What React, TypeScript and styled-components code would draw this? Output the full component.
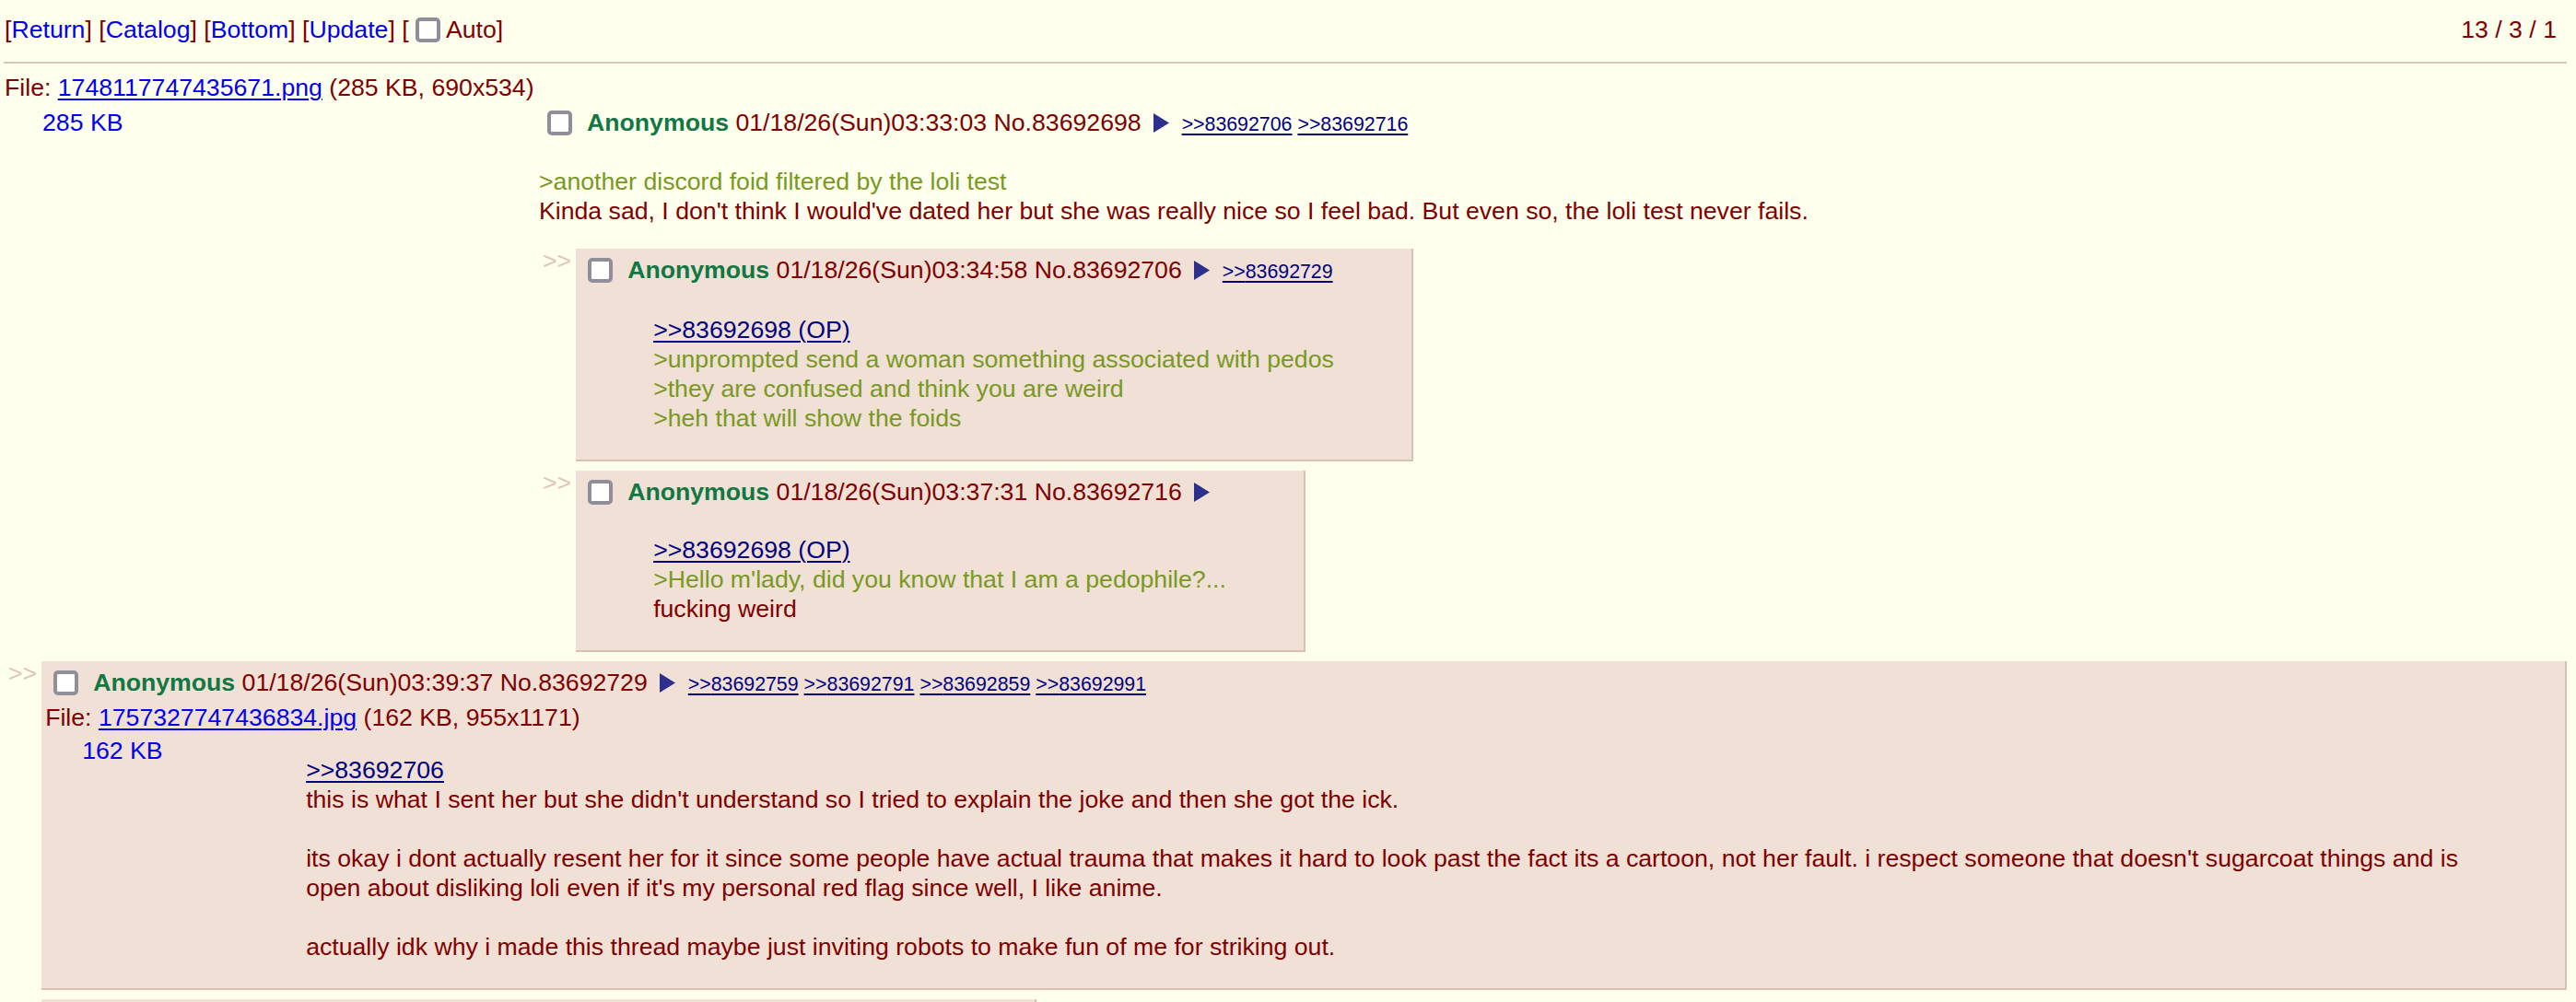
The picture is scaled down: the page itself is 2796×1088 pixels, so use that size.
import React from "react";
import styled, { createGlobalStyle } from "styled-components";

const GlobalStyle = createGlobalStyle`
  html, body {
    margin: 0;
    padding: 0;
    background: #ffe;
  }
  body {
    color: #800000;
    font-family: "Liberation Sans", Arial, Helvetica, sans-serif;
    font-size: 26.67px;
    line-height: 32px;
  }
`;

type Post = {
  no: string;
  time: string;
  backlinks: string[];
  file?: { name: string; info: string; size: string };
  body: React.ReactNode;
};

// built inside App so the styled parts below are defined by then
const getNestedReplies = (): Post[] => [
  {
    no: "83692706",
    time: "01/18/26(Sun)03:34:58",
    backlinks: ["83692729"],
    body: (
      <>
        <QuoteLink>&gt;&gt;83692698 (OP)</QuoteLink>
        <br />
        <Green>&gt;unprompted send a woman something associated with pedos</Green>
        <br />
        <Green>&gt;they are confused and think you are weird</Green>
        <br />
        <Green>&gt;heh that will show the foids</Green>
      </>
    ),
  },
  {
    no: "83692716",
    time: "01/18/26(Sun)03:37:31",
    backlinks: [],
    body: (
      <>
        <QuoteLink>&gt;&gt;83692698 (OP)</QuoteLink>
        <br />
        <Green>&gt;Hello m'lady, did you know that I am a pedophile?...</Green>
        <br />
        fucking weird
      </>
    ),
  },
];

const getReplies = (): Post[] => [
  {
    no: "83692729",
    time: "01/18/26(Sun)03:39:37",
    backlinks: ["83692759", "83692791", "83692859", "83692991"],
    file: { name: "1757327747436834.jpg", info: "(162 KB, 955x1171)", size: "162 KB" },
    body: (
      <>
        <QuoteLink>&gt;&gt;83692706</QuoteLink>
        <br />
        this is what I sent her but she didn't understand so I tried to explain the joke and then she got the ick.
        <br />
        <br />
        its okay i dont actually resent her for it since some people have actual trauma that makes it hard to look past the fact its a cartoon, not her fault. i respect someone that doesn't sugarcoat things and is open about disliking loli even if it's my personal red flag since well, I like anime.
        <br />
        <br />
        actually idk why i made this thread maybe just inviting robots to make fun of me for striking out.
      </>
    ),
  },
  {
    no: "83692759",
    time: "01/18/26(Sun)03:41:12",
    backlinks: [],
    body: (
      <>
        <QuoteLink>&gt;&gt;83692729</QuoteLink>
        <br />
        you sent a random girl a loli picture and are shocked that she got weirded out
      </>
    ),
  },
];

const MenuArrow = () => (
  <ArrowSvg viewBox="0 0 17 21" width="17" height="21">
    <polygon points="0,0 17,10.5 0,21" fill="#2e2e8c" />
  </ArrowSvg>
);

const PostHeader = ({ post }: { post: Post }) => (
  <PostInfo>
    <Checkbox $ml={9} $mr={16} />
    <Name>Anonymous</Name> {post.time} No.{post.no}
    <MenuArrow />
    {post.backlinks.map((b) => (
      <Backlink key={b}>&gt;&gt;{b}</Backlink>
    ))}
  </PostInfo>
);

const Reply = ({ post }: { post: Post }) => (
  <ReplyContainer>
    <SideArrows>&gt;&gt;</SideArrows>
    <ReplyBox>
      <PostHeader post={post} />
      {post.file ? (
        <>
          <FileLine $mt={4}>
            File: <FileLink>{post.file.name}</FileLink> {post.file.info}
          </FileLine>
          <FileRow>
            <Thumb $w={163} $ml={40} $mr={80} $mt={4}>
              {post.file.size}
            </Thumb>
            <Blockquote $mt={25} $ml={0}>
              {post.body}
            </Blockquote>
          </FileRow>
        </>
      ) : (
        <Blockquote $mt={31} $ml={80}>
          {post.body}
        </Blockquote>
      )}
    </ReplyBox>
  </ReplyContainer>
);

export default function App() {
  const nested = getNestedReplies();
  const replies = getReplies();
  return (
    <>
      <GlobalStyle />
      <Page>
        <TopBar>
          <Nav>
            [<NavLink>Return</NavLink>] [<NavLink>Catalog</NavLink>] [
            <NavLink>Bottom</NavLink>] [<NavLink>Update</NavLink>] [ <Checkbox $ml={0} $mr={0} /> Auto]
          </Nav>
          <span>13 / 3 / 1</span>
        </TopBar>
        <Divider />

        <FileLine $mt={10}>
          File: <FileLink>1748117747435671.png</FileLink> (285 KB, 690x534)
        </FileLine>
        <FileRow>
          <Thumb $w={500} $ml={41} $mr={39} $mt={6}>
            285 KB
          </Thumb>
          <OpColumn>
            <PostInfo>
              <Checkbox $ml={9} $mr={16} />
              <Name>Anonymous</Name> 01/18/26(Sun)03:33:03 No.83692698
              <MenuArrow />
              <Backlink>&gt;&gt;83692706</Backlink>
              <Backlink>&gt;&gt;83692716</Backlink>
            </PostInfo>
            <OpBlockquote>
              <Green>&gt;another discord foid filtered by the loli test</Green>
              <br />
              Kinda sad, I don't think I would've dated her but she was really nice so I feel bad. But even so, the loli test never fails.
            </OpBlockquote>
            {nested.map((r) => (
              <Reply key={r.no} post={r} />
            ))}
          </OpColumn>
        </FileRow>

        {replies.map((r) => (
          <Reply key={r.no} post={r} />
        ))}
      </Page>
    </>
  );
}

const Page = styled.div`
  padding: 16px 10px 0 5px;
`;

const TopBar = styled.div`
  display: flex;
  justify-content: space-between;
  align-items: center;
  height: 32px;
  padding-right: 11px;
`;

const Nav = styled.div`
  white-space: nowrap;
`;

const NavLink = styled.a`
  color: #0000ee;
  text-decoration: none;
  cursor: pointer;
`;

const Divider = styled.div`
  margin: 19px 0 0 -1px;
  border-top: 2px solid #d9c5bd;
`;

const Checkbox = styled.span<{ $ml: number; $mr: number }>`
  display: inline-block;
  box-sizing: border-box;
  width: 27px;
  height: 27px;
  margin: 0 ${(p) => p.$mr}px 0 ${(p) => p.$ml}px;
  border: 4px solid #8f8e99;
  border-radius: 5px;
  background: #fff;
  vertical-align: -5px;
`;

const FileLine = styled.div<{ $mt: number }>`
  margin-top: ${(p) => p.$mt}px;
  white-space: nowrap;
`;

const FileLink = styled.a`
  color: #0000ee;
  text-decoration: underline;
  text-decoration-thickness: 2px;
  text-underline-offset: 3px;
`;

const FileRow = styled.div`
  display: flex;
  align-items: flex-start;
`;

const Thumb = styled.div<{ $w: number; $ml: number; $mr: number; $mt: number }>`
  flex: none;
  width: ${(p) => p.$w}px;
  margin: ${(p) => p.$mt}px ${(p) => p.$mr}px 0 ${(p) => p.$ml}px;
  color: #0000ee;
`;

const OpColumn = styled.div`
  flex: 1;
  min-width: 0;
  margin-top: 6px;
`;

const PostInfo = styled.div`
  white-space: nowrap;
`;

const Name = styled.span`
  color: #117743;
  font-weight: bold;
`;

const ArrowSvg = styled.svg`
  display: inline-block;
  margin: 0 14px 0 13px;
  vertical-align: -2px;
`;

const Backlink = styled.a`
  color: #000080;
  font-size: 0.8em;
  text-decoration: underline;
  text-decoration-thickness: 2px;
  text-underline-offset: 3px;
  margin-right: 6px;
`;

const OpBlockquote = styled.div`
  margin: 30px 0 25px 0;
`;

const Green = styled.span`
  color: #789922;
`;

const QuoteLink = styled.a`
  color: #000080;
  text-decoration: underline;
  text-decoration-thickness: 2px;
  text-underline-offset: 3px;
`;

const ReplyContainer = styled.div`
  display: flex;
  align-items: flex-start;
  padding-left: 4px;
  margin-bottom: 10px;
`;

const SideArrows = styled.div`
  flex: none;
  color: #e0c4bc;
  margin: -3px 5px 0 0;
`;

const ReplyBox = styled.div`
  min-width: 0;
  padding: 7px 4px 0 4px;
  background: #f0e0d6;
  border-right: 2px solid #d9bfb7;
  border-bottom: 2px solid #d9bfb7;
`;

const Blockquote = styled.div<{ $mt: number; $ml: number }>`
  margin: ${(p) => p.$mt}px 80px 29px ${(p) => p.$ml}px;
`;
